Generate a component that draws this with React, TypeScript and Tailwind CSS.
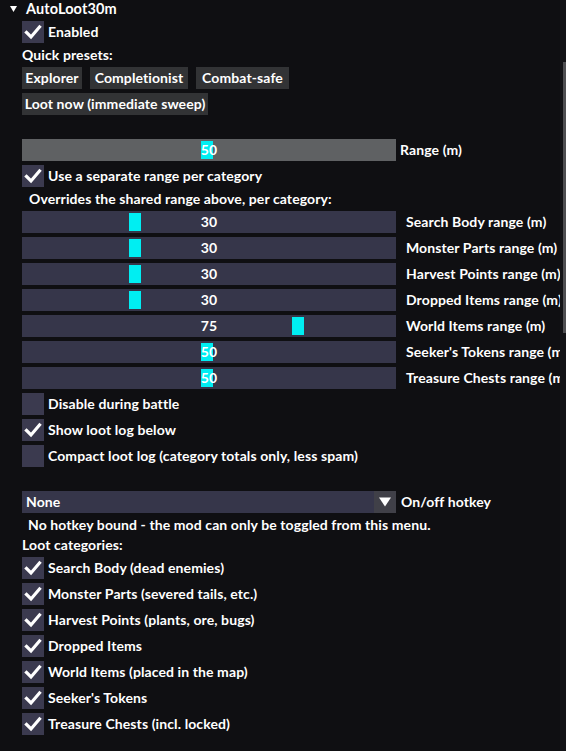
import { ReactNode } from "react";

const sliders = [
  { label: "Search Body range (m)", value: 30 },
  { label: "Monster Parts range (m)", value: 30 },
  { label: "Harvest Points range (m)", value: 30 },
  { label: "Dropped Items range (m)", value: 30 },
  { label: "World Items range (m)", value: 75 },
  { label: "Seeker's Tokens range (m)", value: 50 },
  { label: "Treasure Chests range (m)", value: 50 },
];

const categories = [
  "Search Body (dead enemies)",
  "Monster Parts (severed tails, etc.)",
  "Harvest Points (plants, ore, bugs)",
  "Dropped Items",
  "World Items (placed in the map)",
  "Seeker's Tokens",
  "Treasure Chests (incl. locked)",
];

const presets = [
  { name: "Explorer", w: "w-[60px]" },
  { name: "Completionist", w: "w-[98px]" },
  { name: "Combat-safe", w: "w-[93px]" },
];

// grab offset in px from the slider's left edge
const grabLeft = (v: number) => 107 + (v - 30) * 3.62;

function Check({ on, label }: { on: boolean; label: string }) {
  return (
    <div className="flex items-center h-[22px] gap-[4px]">
      <div className="w-[22px] h-[22px] bg-[#3b3a4f] flex items-center justify-center shrink-0">
        {on && (
          <svg width="22" height="22" viewBox="0 0 22 22">
            <path d="M4.5 11.5 L9 16 L17.5 6" fill="none" stroke="#fff" strokeWidth="3.2" strokeLinecap="square" />
          </svg>
        )}
      </div>
      <span className="whitespace-nowrap">{label}</span>
    </div>
  );
}

function Slider({ value, label, grey, labelClass }: { value: number; label: string; grey?: boolean; labelClass?: string }) {
  return (
    <div className="flex items-center h-[22px]">
      <div className={`relative w-[374px] h-[22px] shrink-0 ${grey ? "bg-[#5f6163]" : "bg-[#36364a]"}`}>
        <div className="absolute top-[2px] w-[12px] h-[18px] bg-[#00eef2]" style={{ left: grabLeft(value) }} />
        <span className="relative flex h-full items-center justify-center">{value}</span>
      </div>
      <span className={`whitespace-nowrap ${labelClass ?? "ml-[4px]"}`}>{label}</span>
    </div>
  );
}

function Line({ children, className = "" }: { children: ReactNode; className?: string }) {
  return <div className={`h-[16px] flex items-center whitespace-nowrap ${className}`}>{children}</div>;
}

export default function App() {
  return (
    <div className="w-[566px] h-[751px] bg-[#0f0f12] flex overflow-hidden text-white text-[14px] leading-[16px] tracking-[0.1px] font-bold font-['Lato','Liberation_Sans',sans-serif]">
      <div className="w-[560px] overflow-hidden flex flex-col gap-[4px]">
        {/* tree header */}
        <div className="h-[17px] flex items-center">
          <svg width="26" height="17" viewBox="0 0 26 17" className="shrink-0">
            <path d="M10 6 L17 6 L13.5 12 Z" fill="#fff" />
          </svg>
          <span className="text-[14.5px]">AutoLoot30m</span>
        </div>

        <div className="pl-[22px] flex flex-col gap-[4px]">
          <Check on label="Enabled" />
          <Line>Quick presets:</Line>
          <div className="flex gap-[8px] h-[22px]">
            {presets.map((p) => (
              <div key={p.name} className={`${p.w} h-[22px] bg-[#323335] flex items-center justify-center`}>
                {p.name}
              </div>
            ))}
          </div>
          <div className="w-[186px] h-[22px] bg-[#323335] flex items-center justify-center whitespace-nowrap">
            Loot now (immediate sweep)
          </div>
          <Line>{""}</Line>

          <Slider grey value={50} label="Range (m)" />
          <Check on label="Use a separate range per category" />
          <Line className="pl-[7px]">Overrides the shared range above, per category:</Line>
          {sliders.map((s) => (
            <Slider key={s.label} value={s.value} label={s.label} labelClass="ml-[10px]" />
          ))}
          <Check on={false} label="Disable during battle" />
          <Check on label="Show loot log below" />
          <Check on={false} label="Compact loot log (category totals only, less spam)" />
          <Line>{""}</Line>

          <div className="flex items-center h-[22px]">
            <div className="w-[374px] h-[22px] flex shrink-0">
              <div className="flex-1 bg-[#36364a] flex items-center pl-[4px]">None</div>
              <div className="w-[22px] h-[22px] bg-[#404048] flex items-center justify-center">
                <svg width="14" height="12" viewBox="0 0 14 12">
                  <path d="M1 1.5 L13 1.5 L7 10.5 Z" fill="#fff" />
                </svg>
              </div>
            </div>
            <span className="ml-[5px] whitespace-nowrap">On/off hotkey</span>
          </div>
          <Line className="pl-[6px]">No hotkey bound - the mod can only be toggled from this menu.</Line>
          <Line>Loot categories:</Line>
          {categories.map((c) => (
            <Check key={c} on label={c} />
          ))}
        </div>
      </div>

      {/* scrollbar */}
      <div className="w-[6px] h-full bg-[#141417] flex flex-col items-end">
        <div className="mt-[62px] w-[3px] h-[271px] bg-[#4f4f52]" />
      </div>
    </div>
  );
}
